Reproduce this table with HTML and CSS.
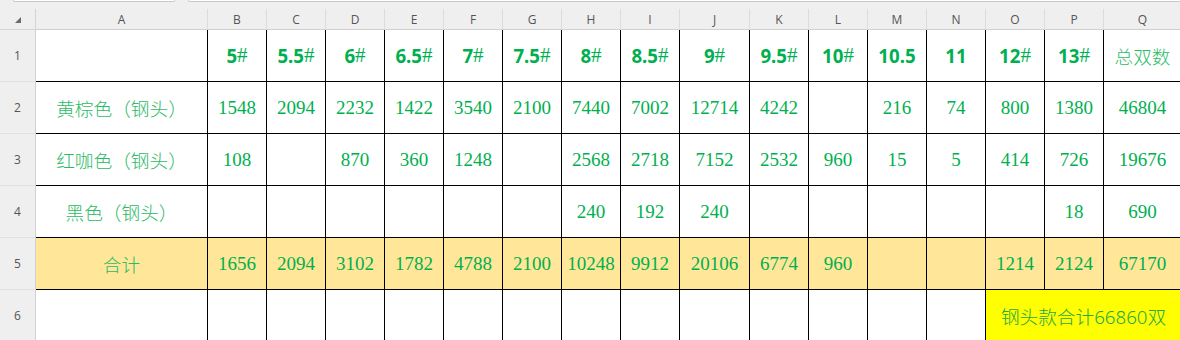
FILE: index.html
```html
<!DOCTYPE html>
<html lang="zh">
<head>
<meta charset="utf-8">
<link rel="stylesheet" href="styles.css">
</head>
<body>
<div class="sheet">
  <div class="topstrip"><span class="tab t1"></span><span class="tab t2"></span></div>
  <div class="grid">
    <div class="corner"><span class="tri"></span></div>
    <div class="ch">A</div><div class="ch">B</div><div class="ch">C</div><div class="ch">D</div><div class="ch">E</div><div class="ch">F</div><div class="ch">G</div><div class="ch">H</div><div class="ch">I</div><div class="ch">J</div><div class="ch">K</div><div class="ch">L</div><div class="ch">M</div><div class="ch">N</div><div class="ch">O</div><div class="ch">P</div><div class="ch">Q</div>

    <div class="rh">1</div>
    <div class="c"></div>
    <div class="c hd">5<span class="sh">#</span></div><div class="c hd">5.5<span class="sh">#</span></div><div class="c hd">6<span class="sh">#</span></div><div class="c hd">6.5<span class="sh">#</span></div><div class="c hd">7<span class="sh">#</span></div><div class="c hd">7.5<span class="sh">#</span></div><div class="c hd">8<span class="sh">#</span></div><div class="c hd">8.5<span class="sh">#</span></div><div class="c hd">9<span class="sh">#</span></div><div class="c hd">9.5<span class="sh">#</span></div><div class="c hd">10<span class="sh">#</span></div><div class="c hd">10.5</div><div class="c hd">11</div><div class="c hd">12<span class="sh">#</span></div><div class="c hd">13<span class="sh">#</span></div><div class="c cjk">总双数</div>

    <div class="rh">2</div>
    <div class="c cjk">黄棕色（钢头）</div>
    <div class="c num">1548</div><div class="c num">2094</div><div class="c num">2232</div><div class="c num">1422</div><div class="c num">3540</div><div class="c num">2100</div><div class="c num">7440</div><div class="c num">7002</div><div class="c num">12714</div><div class="c num">4242</div><div class="c num"></div><div class="c num">216</div><div class="c num">74</div><div class="c num">800</div><div class="c num">1380</div><div class="c num">46804</div>

    <div class="rh">3</div>
    <div class="c cjk">红咖色（钢头）</div>
    <div class="c num">108</div><div class="c num"></div><div class="c num">870</div><div class="c num">360</div><div class="c num">1248</div><div class="c num"></div><div class="c num">2568</div><div class="c num">2718</div><div class="c num">7152</div><div class="c num">2532</div><div class="c num">960</div><div class="c num">15</div><div class="c num">5</div><div class="c num">414</div><div class="c num">726</div><div class="c num">19676</div>

    <div class="rh">4</div>
    <div class="c cjk">黑色（钢头）</div>
    <div class="c num"></div><div class="c num"></div><div class="c num"></div><div class="c num"></div><div class="c num"></div><div class="c num"></div><div class="c num">240</div><div class="c num">192</div><div class="c num">240</div><div class="c num"></div><div class="c num"></div><div class="c num"></div><div class="c num"></div><div class="c num"></div><div class="c num">18</div><div class="c num">690</div>

    <div class="rh">5</div>
    <div class="c cjk tot">合计</div>
    <div class="c num tot">1656</div><div class="c num tot">2094</div><div class="c num tot">3102</div><div class="c num tot">1782</div><div class="c num tot">4788</div><div class="c num tot">2100</div><div class="c num tot">10248</div><div class="c num tot">9912</div><div class="c num tot">20106</div><div class="c num tot">6774</div><div class="c num tot">960</div><div class="c num tot"></div><div class="c num tot"></div><div class="c num tot">1214</div><div class="c num tot">2124</div><div class="c num tot">67170</div>

    <div class="rh">6</div>
    <div class="c blank"></div>
    <div class="c"></div><div class="c"></div><div class="c"></div><div class="c"></div><div class="c"></div><div class="c"></div><div class="c"></div><div class="c"></div><div class="c"></div><div class="c"></div><div class="c"></div><div class="c"></div><div class="c"></div>
    <div class="c merged">钢头款合计66860双</div>
  </div>
</div>
</body>
</html>
```
FILE: styles.css
```css
html, body {
  margin: 0;
  padding: 0;
  background: #ffffff;
}
.sheet {
  width: 1180px;
  height: 340px;
  overflow: hidden;
  background: #efefef;
}
.topstrip {
  height: 9px;
  display: flex;
  gap: 13px;
  background: #efefef;
}
.tab {
  display: block;
  height: 1px;
  background: #ffffff;
  border-bottom: 1px solid #c8c8c8;
}
.t1 {
  width: 160px;
  margin-left: 13px;
  border-right: 1px solid #c8c8c8;
  border-left: 1px solid #c8c8c8;
  border-radius: 0 0 3px 3px;
}
.t2 {
  flex: 1;
  border-left: 1px solid #c8c8c8;
  border-radius: 0 0 0 3px;
}
.grid {
  display: grid;
  grid-template-columns: 36px 172px repeat(8, 59px) 70px repeat(6, 59px) 78px;
  grid-template-rows: 21px repeat(6, 52px);
  background: #ffffff;
}
.corner {
  background: #efefef;
  border-right: 1px solid #d4d4d4;
  border-bottom: 1px solid #d4d4d4;
  box-sizing: border-box;
  display: flex;
  justify-content: flex-start;
  align-items: flex-start;
}
.tri {
  width: 0;
  height: 0;
  margin: 8px 0 0 15px;
  border-left: 6px solid transparent;
  border-bottom: 6px solid #6a6a6a;
}
.ch {
  background: #efefef;
  border-right: 1px solid #dcdcdc;
  border-bottom: 1px solid #d0d0d0;
  box-sizing: border-box;
  display: flex;
  align-items: center;
  justify-content: center;
  font-family: "Open Sans", "Noto Sans", sans-serif;
  font-size: 12px;
  color: #555555;
}
.rh {
  background: #efefef;
  border-right: 1px solid #d0d0d0;
  border-bottom: 1px solid #e0e0e0;
  box-sizing: border-box;
  display: flex;
  align-items: center;
  justify-content: center;
  font-family: "Open Sans", "Noto Sans", sans-serif;
  font-size: 12px;
  color: #555555;
}
.c {
  box-sizing: border-box;
  border-right: 1px solid #000000;
  border-bottom: 1px solid #000000;
  display: flex;
  align-items: center;
  justify-content: center;
  color: #00b050;
  white-space: nowrap;
  background: #ffffff;
}
.hd {
  font-family: "Noto Sans", "Open Sans", sans-serif;
  font-weight: 700;
  font-size: 18.67px;
}
.sh {
  font-family: "Liberation Serif", serif;
  font-weight: 400;
  font-size: 21px;
  line-height: 1;
}
.num {
  font-family: "Liberation Serif", serif;
  font-size: 19px;
}
.cjk {
  font-family: "Noto Sans CJK SC", sans-serif;
  font-weight: 300;
  font-size: 18.67px;
  color: #2bbb66;
}
.tot {
  background: #ffe699;
}
.blank {
  border-bottom: none;
}
.merged {
  grid-column: span 3;
  background: #ffff00;
  font-family: "Noto Sans", "Noto Sans CJK SC", sans-serif;
  font-weight: 300;
  font-size: 18.67px;
  color: #22a84a;
}
```
